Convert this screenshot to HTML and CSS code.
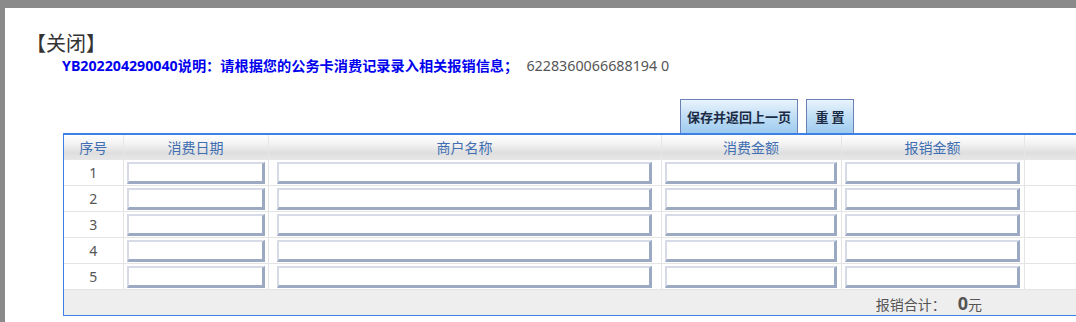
FILE: index.html
```html
<!DOCTYPE html>
<html lang="zh-CN">
<head>
  <meta charset="UTF-8" />
  <title>公务卡报销</title>
  <link rel="stylesheet" href="styles.css">
</head>
<body>
  <div class="frame">
    <div class="panel">
      <div class="close-link">【关闭】</div>
      <div class="notice">
        <span class="notice-main">YB202204290040说明：请根据您的公务卡消费记录录入相关报销信息；</span>
        <span class="card-no">6228360066688194 0</span>
      </div>

      <div class="toolbar">
        <button class="btn">保存并返回上一页</button>
        <button class="btn">重&nbsp;置</button>
      </div>

      <div class="grid-wrap">
        <table class="grid">
          <colgroup>
            <col class="c-no">
            <col class="c-date">
            <col class="c-name">
            <col class="c-amt">
            <col class="c-reim">
            <col class="c-rest">
          </colgroup>
          <thead>
            <tr>
              <th>序号</th>
              <th>消费日期</th>
              <th>商户名称</th>
              <th>消费金额</th>
              <th>报销金额</th>
              <th></th>
            </tr>
          </thead>
          <tbody>
            <tr>
              <td class="no">1</td>
              <td><input class="in in-date" type="text"></td>
              <td><input class="in in-name" type="text"></td>
              <td><input class="in in-amt" type="text"></td>
              <td><input class="in in-reim" type="text"></td>
              <td></td>
            </tr>
            <tr>
              <td class="no">2</td>
              <td><input class="in in-date" type="text"></td>
              <td><input class="in in-name" type="text"></td>
              <td><input class="in in-amt" type="text"></td>
              <td><input class="in in-reim" type="text"></td>
              <td></td>
            </tr>
            <tr>
              <td class="no">3</td>
              <td><input class="in in-date" type="text"></td>
              <td><input class="in in-name" type="text"></td>
              <td><input class="in in-amt" type="text"></td>
              <td><input class="in in-reim" type="text"></td>
              <td></td>
            </tr>
            <tr>
              <td class="no">4</td>
              <td><input class="in in-date" type="text"></td>
              <td><input class="in in-name" type="text"></td>
              <td><input class="in in-amt" type="text"></td>
              <td><input class="in in-reim" type="text"></td>
              <td></td>
            </tr>
            <tr>
              <td class="no">5</td>
              <td><input class="in in-date" type="text"></td>
              <td><input class="in in-name" type="text"></td>
              <td><input class="in in-amt" type="text"></td>
              <td><input class="in in-reim" type="text"></td>
              <td></td>
            </tr>
          </tbody>
          <tfoot>
            <tr>
              <td colspan="5" class="total">报销合计：<b class="total-num">0</b>元</td>
              <td></td>
            </tr>
          </tfoot>
        </table>
      </div>
    </div>
  </div>
</body>
</html>
```

FILE: styles.css
```css
html, body {
  margin: 0;
  padding: 0;
  overflow: hidden;
}
body {
  font-family: "Noto Sans", "Noto Sans CJK SC", sans-serif;
  background-color: #8a8a8a;
  width: 1076px;
  height: 322px;
}
.frame {
  padding: 8px 0 0 5px;
  height: 314px;
}
.panel {
  background: white;
  height: 314px;
  padding-left: 27px;
  overflow: hidden;
}
.close-link {
  padding-top: 23px;
  margin-left: -6px;
  font-size: 20px;
  line-height: 26px;
  color: #333;
}
.notice {
  margin-left: 30px;
  margin-top: -3px;
  line-height: 22px;
  white-space: nowrap;
}
.notice-main {
  color: #0000ee;
  font-weight: bold;
  font-size: 14.2px;
}
.card-no {
  color: #555;
  font-size: 14.3px;
  margin-left: 4px;
}
.toolbar {
  display: flex;
  gap: 8px;
  margin: 22px 0 0 648px;
  height: 34px;
}
.btn {
  font-family: "Noto Sans CJK SC", sans-serif;
  font-size: 13px;
  font-weight: bold;
  color: #1c2b45;
  border: 1px solid #6a80b6;
  border-bottom: none;
  background: linear-gradient(#eaf4fc, #c4e0f6 45%, #9ecbef);
  padding: 0 4px;
  height: 34px;
  margin: 0;
}
.btn:first-child {
  width: 118px;
}
.btn:last-child {
  width: 48px;
}
.grid-wrap {
  margin-left: 31px;
  width: 1100px;
  border: 1px solid #3d80e6;
  border-top: 2px solid #3d80e6;
}
.grid {
  border-collapse: collapse;
  width: 1100px;
  border-style: hidden;
  table-layout: fixed;
}
.c-no { width: 59px; }
.c-date { width: 145px; }
.c-name { width: 393px; }
.c-amt { width: 180px; }
.c-reim { width: 183px; }
.grid th {
  height: 24px;
  padding: 0;
  font-weight: normal;
  font-size: 14px;
  color: #3f6fb2;
  background: linear-gradient(#ffffff, #f3f3f3 35%, #dedede 75%, #e6e6e6);
  border: 1px solid #e6e6e6;
}
.grid td {
  height: 25px;
  padding: 0;
  border: 1px solid #e4e4e4;
  text-align: center;
}
.grid td.no {
  font-size: 14px;
  color: #555;
}
.in {
  box-sizing: border-box;
  height: 22px;
  margin: 1px auto 0;
  display: block;
  border: 2px solid;
  border-color: #d6dbe7 #9ba9c3 #9ba9c3 #d6dbe7;
  border-width: 2px 3px 3px 2px;
  background: white;
}
.in-date { width: 138px; }
.in-name { width: 375px; }
.in-amt { width: 172px; }
.in-reim { width: 175px; }
.grid tfoot td {
  background: #eeeeee;
  border-left: none;
  border-right: none;
  height: 25px;
}
.grid td.total {
  text-align: right;
  padding-right: 42px;
  font-size: 14px;
  color: #555;
}
.total-num {
  font-size: 18px;
  color: #555;
  margin-left: 12px;
}
```
